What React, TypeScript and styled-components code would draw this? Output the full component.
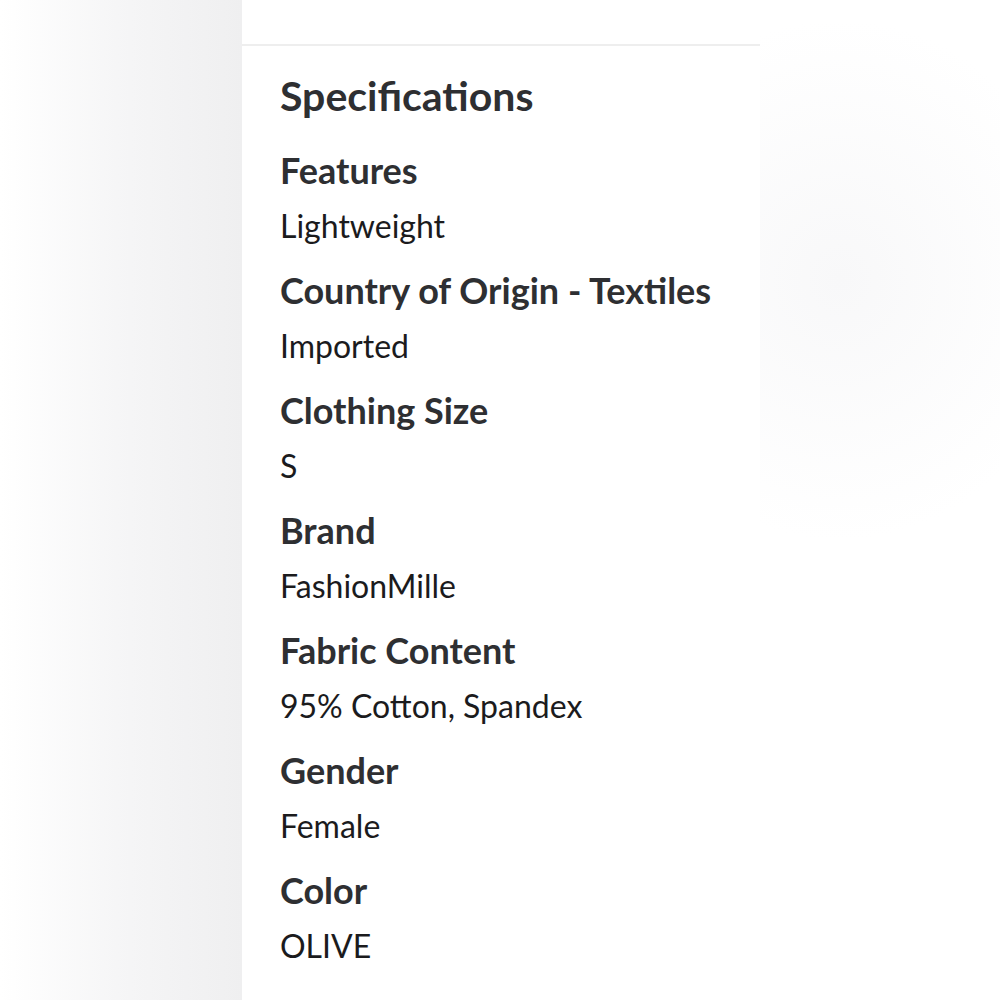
import styled, { createGlobalStyle } from "styled-components";

const GlobalStyle = createGlobalStyle`
  html, body {
    margin: 0;
    padding: 0;
  }
  body {
    width: 1000px;
    height: 1000px;
    overflow: hidden;
    font-family: Lato, "Open Sans", sans-serif;
    background:
      radial-gradient(ellipse 240px 260px at 840px 280px, #f8f8f9 0%, rgba(255,255,255,0) 100%),
      linear-gradient(to right, #ffffff 0px, #f5f5f6 130px, #efeff0 242px, #ffffff 242px);
  }
`;

const Page = styled.div`
  display: flex;
  min-height: 1000px;
`;

const Gutter = styled.div`
  width: 242px;
  flex-shrink: 0;
`;

const Panel = styled.section`
  width: 518px;
  background: #ffffff;
  display: flex;
  flex-direction: column;
`;

const TopBar = styled.div`
  height: 44px;
  border-bottom: 2px solid #eeeeee;
`;

const Content = styled.div`
  padding: 26px 38px 0;
  display: flex;
  flex-direction: column;
  gap: 16px;
`;

const Heading = styled.h2`
  margin: 0 0 10px;
  font-size: 41px;
  line-height: 48px;
  font-weight: 700;
  color: #2e2f32;
`;

const Item = styled.div`
  display: flex;
  flex-direction: column;
  gap: 8px;
`;

const Label = styled.div`
  font-size: 36px;
  line-height: 48px;
  font-weight: 700;
  color: #2e2f32;
`;

const Value = styled.div`
  font-size: 32px;
  line-height: 48px;
  font-weight: 400;
  color: #1b1b1d;
`;

const specs = [
  { label: "Features", value: "Lightweight" },
  { label: "Country of Origin - Textiles", value: "Imported" },
  { label: "Clothing Size", value: "S" },
  { label: "Brand", value: "FashionMille" },
  { label: "Fabric Content", value: "95% Cotton, Spandex" },
  { label: "Gender", value: "Female" },
  { label: "Color", value: "OLIVE" },
];

export default function App() {
  return (
    <>
      <GlobalStyle />
      <Page>
        <Gutter />
        <Panel>
          <TopBar />
          <Content>
            <Heading>Specifications</Heading>
            {specs.map((s) => (
              <Item key={s.label}>
                <Label>{s.label}</Label>
                <Value>{s.value}</Value>
              </Item>
            ))}
          </Content>
        </Panel>
      </Page>
    </>
  );
}
